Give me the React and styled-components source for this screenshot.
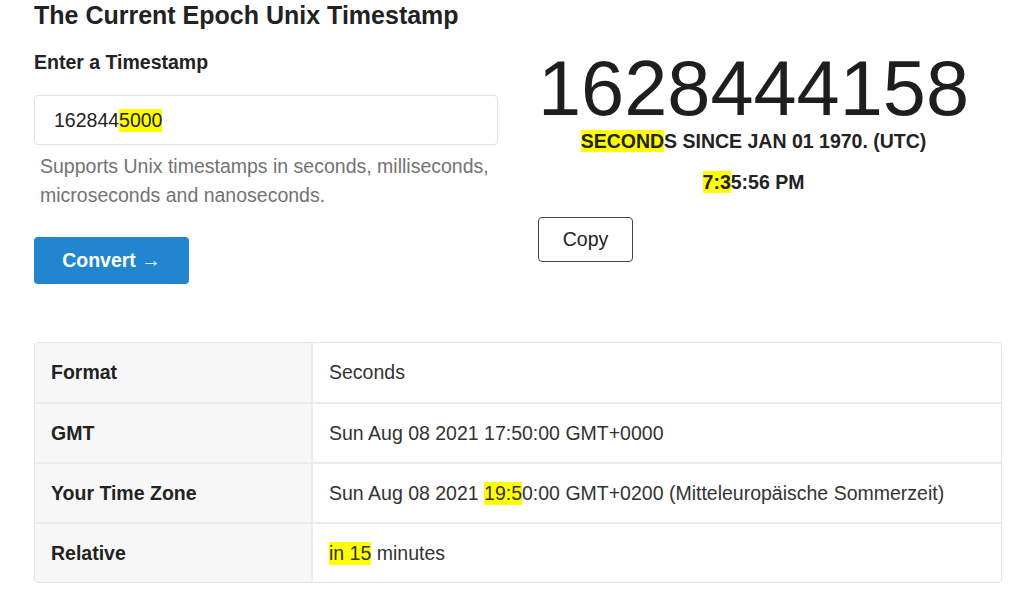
import React from 'react';
import styled, { createGlobalStyle } from 'styled-components';

const GlobalStyle = createGlobalStyle`
    body {
        margin: 0;
        background: #ffffff;
        font-family: "Liberation Sans", Arial, sans-serif;
        color: #212121;
    }
`;

const rows = [
    { label: 'Format', value: ['Seconds'] },
    { label: 'GMT', value: ['Sun Aug 08 2021 17:50:00 GMT+0000'] },
    {
        label: 'Your Time Zone',
        value: ['Sun Aug 08 2021 ', { mark: '19:5' }, '0:00 GMT+0200 (Mitteleuropäische Sommerzeit)'],
    },
    { label: 'Relative', value: [{ mark: 'in 15' }, ' minutes'] },
];

function renderParts(parts) {
    return parts.map((p, i) =>
        typeof p === 'string' ? <React.Fragment key={i}>{p}</React.Fragment> : <Mark key={i}>{p.mark}</Mark>
    );
}

export default function App() {
    return (
        <Page>
            <GlobalStyle />
            <Title>The Current Epoch Unix Timestamp</Title>

            <Top>
                <Left>
                    <Label>Enter a Timestamp</Label>
                    <InputBox>
                        162844<Mark>5000</Mark>
                    </InputBox>
                    <Help>
                        Supports Unix timestamps in seconds, milliseconds,
                        <br />
                        microseconds and nanoseconds.
                    </Help>
                    <ConvertButton>Convert →</ConvertButton>
                </Left>

                <Right>
                    <BigNumber>1628444158</BigNumber>
                    <Since>
                        <Mark>SECOND</Mark>S SINCE JAN 01 1970. (UTC)
                    </Since>
                    <Clock>
                        <Mark>7:3</Mark>5:56 PM
                    </Clock>
                    <CopyButton>Copy</CopyButton>
                </Right>
            </Top>

            <Table>
                {rows.map((row) => (
                    <Row key={row.label}>
                        <HeadCell>{row.label}</HeadCell>
                        <ValueCell>{renderParts(row.value)}</ValueCell>
                    </Row>
                ))}
            </Table>
        </Page>
    );
}

const Page = styled.div`
    box-sizing: border-box;
    width: 1024px;
    padding: 0 22px 0 34px;
`;

const Title = styled.h1`
    margin: 0;
    font-size: 25px;
    line-height: 30px;
    font-weight: 700;
    color: #222;
`;

const Top = styled.div`
    display: grid;
    grid-template-columns: 464px minmax(0, 1fr);
    column-gap: 40px;
    margin-top: 19px;
`;

const Left = styled.div`
    display: flex;
    flex-direction: column;
    align-items: flex-start;
`;

const Label = styled.div`
    margin-top: 1px;
    font-size: 19.5px;
    line-height: 24px;
    font-weight: 700;
    color: #222;
`;

const InputBox = styled.div`
    box-sizing: border-box;
    width: 464px;
    height: 50px;
    margin-top: 21px;
    padding: 0 19px;
    display: flex;
    align-items: center;
    border: 1px solid #e2e2e2;
    border-radius: 4px;
    font-size: 19.5px;
    color: #222;
`;

const Mark = styled.span`
    background: #ffff00;
`;

const Help = styled.p`
    margin: 7px 0 0 6px;
    font-size: 19.5px;
    line-height: 29px;
    color: #737373;
`;

const ConvertButton = styled.button`
    margin-top: 27px;
    width: 155px;
    height: 47px;
    border: none;
    border-radius: 4px;
    background: #2185d0;
    color: #ffffff;
    font-family: "Liberation Sans", Arial, sans-serif;
    font-size: 19.5px;
    font-weight: 700;
    cursor: pointer;
`;

const Right = styled.div`
    display: flex;
    flex-direction: column;
    align-items: center;
    padding-right: 33px;
`;

const BigNumber = styled.div`
    margin-top: -1px;
    font-size: 77.5px;
    line-height: 80px;
    color: #1e1e1e;
    white-space: nowrap;
`;

const Since = styled.div`
    margin-top: 1px;
    font-size: 19.5px;
    line-height: 24px;
    font-weight: 700;
    color: #222;
`;

const Clock = styled.div`
    margin-top: 17px;
    font-size: 19.5px;
    line-height: 24px;
    font-weight: 700;
    color: #222;
`;

const CopyButton = styled.button`
    align-self: flex-start;
    margin-top: 23px;
    width: 95px;
    height: 45px;
    background: #ffffff;
    border: 1px solid #444;
    border-radius: 4px;
    font-family: "Liberation Sans", Arial, sans-serif;
    font-size: 19.5px;
    color: #222;
`;

const Table = styled.div`
    margin-top: 58px;
    border: 1px solid #e3e3e3;
    border-radius: 4px;
    overflow: hidden;
`;

const Row = styled.div`
    display: grid;
    grid-template-columns: 278px 1fr;
    height: 59px;

    & + & {
        border-top: 2px solid #ececec;
        height: 58px;
    }
`;

const HeadCell = styled.div`
    display: flex;
    align-items: center;
    padding-left: 16px;
    background: #f7f7f7;
    border-right: 2px solid #ececec;
    font-size: 19.5px;
    font-weight: 700;
    color: #222;
`;

const ValueCell = styled.div`
    display: flex;
    align-items: center;
    padding-left: 16px;
    font-size: 19.5px;
    color: #333;
    white-space: pre;
`;
